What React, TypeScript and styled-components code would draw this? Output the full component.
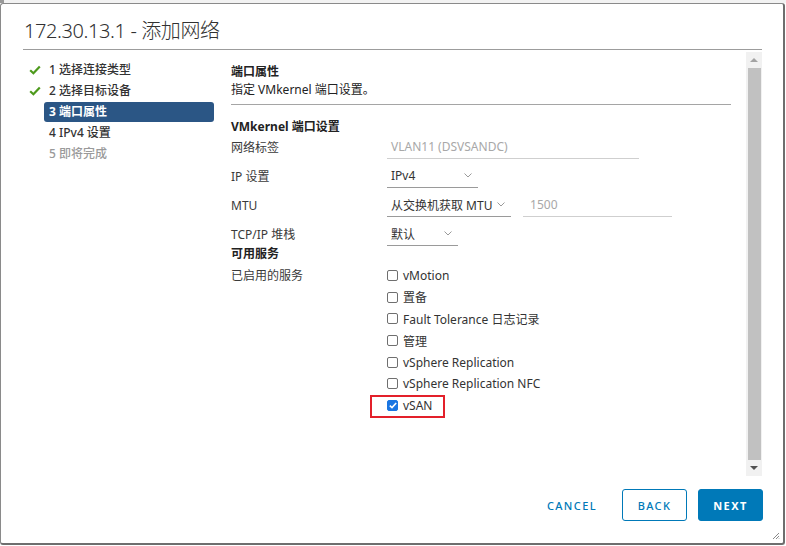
import type { FC } from "react";
import styled, { createGlobalStyle } from "styled-components";

const GlobalStyle = createGlobalStyle`
  html, body {
    margin: 0;
    padding: 0;
    background: #ffffff;
  }
  body {
    font-family: "Noto Sans", "Noto Sans CJK SC", sans-serif;
    font-size: 12px;
    color: #333;
  }
`;

const Backdrop = styled.div`
  height: 3px;
  background: linear-gradient(90deg, #9a9a9a 0 4px, #f2f2f2 4px);
`;

const Dialog = styled.div`
  box-sizing: border-box;
  width: 785px;
  height: 542px;
  background: #fff;
  border: 1px solid #8a8a8a;
  border-right: 2px solid #6e6e6e;
  border-bottom: 2px solid #6e6e6e;
  border-radius: 3px;
  display: flex;
  flex-direction: column;
  position: relative;
`;

const Header = styled.div`
  margin: 0 21px 0 22px;
  padding: 13px 0 4px 1px;
  border-bottom: 1px solid #9c9c9c;
`;

const Title = styled.h1`
  margin: 0;
  font-size: 20px;
  line-height: 28px;
  font-weight: 300;
  letter-spacing: -0.4px;
  color: #313131;
  font-family: "Noto Sans", "Noto Sans CJK SC", sans-serif;
`;

const Body = styled.div`
  display: flex;
  height: 424px;
  margin-top: 2px;
  padding: 0 21px 0 28px;
`;

const Nav = styled.ul`
  list-style: none;
  margin: 0;
  padding: 8px 0 0;
  display: flex;
  flex-direction: column;
  gap: 1px;
`;

const NavRow = styled.li`
  display: flex;
  align-items: center;
  height: 20px;
`;

const NavIconSlot = styled.span`
  width: 15px;
  display: flex;
  align-items: center;
`;

const NavLabel = styled.span<{ $active?: boolean; $disabled?: boolean }>`
  box-sizing: border-box;
  width: 170px;
  height: 20px;
  line-height: 20px;
  padding-left: 5px;
  border-radius: 3px;
  font-weight: ${(p) => (p.$active ? 700 : 500)};
  background: ${(p) => (p.$active ? "#2b5685" : "transparent")};
  color: ${(p) => (p.$active ? "#fff" : p.$disabled ? "#9a9a9a" : "#333")};
`;

const Content = styled.div`
  width: 502px;
  margin-left: 17px;
  display: flex;
  flex-direction: column;
`;

const SectionTitle = styled.div<{ $gap: number; $lh: number }>`
  margin-top: ${(p) => p.$gap}px;
  line-height: ${(p) => p.$lh}px;
  font-weight: 700;
  color: #222;
`;

const Description = styled.div`
  line-height: 18px;
  color: #222;
`;

const Divider = styled.hr`
  margin: 5px 0 0;
  border: 0;
  border-top: 1px solid #a5a5a5;
`;

const FormRow = styled.div`
  display: flex;
  align-items: center;
  height: 24px;
  margin-top: 5px;

  &:first-of-type {
    margin-top: 0;
  }
`;

const Label = styled.span`
  width: 156px;
  flex-shrink: 0;
  color: #3a3a3a;
`;

const Field = styled.div<{ $width: number; $muted?: boolean }>`
  box-sizing: border-box;
  width: ${(p) => p.$width}px;
  height: 24px;
  padding: 0 6px 0 4px;
  display: flex;
  align-items: center;
  justify-content: space-between;
  border-bottom: 1px solid ${(p) => (p.$muted ? "#cfcfcf" : "#9a9a9a")};
  color: ${(p) => (p.$muted ? "#a8a8a8" : "#333")};
  white-space: nowrap;
`;

const FieldGroup = styled.div`
  display: flex;
  gap: 12px;
`;

const Rows = styled.div`
  display: flex;
  flex-direction: column;
`;

const ServicesRow = styled.div`
  display: flex;
  margin-top: 3px;
`;

const ServicesLabel = styled(Label)`
  line-height: 21.6px;
`;

const ServiceList = styled.div`
  display: flex;
  flex-direction: column;
`;

const ServiceItem = styled.div`
  position: relative;
  height: 21.6px;
  display: flex;
  align-items: center;
  gap: 5px;
  color: #333;
`;

const Box = styled.span<{ $checked?: boolean }>`
  box-sizing: border-box;
  width: 11px;
  height: 11px;
  border-radius: 2px;
  border: 1px solid ${(p) => (p.$checked ? "#1b76e2" : "#6f6f6f")};
  background: ${(p) => (p.$checked ? "#1b76e2" : "#fff")};
  display: flex;
  align-items: center;
  justify-content: center;
`;

const Highlight = styled.span`
  position: absolute;
  left: -17px;
  top: 0;
  width: 75px;
  height: 23px;
  box-sizing: border-box;
  border: 2px solid #e3202a;
`;

const Scrollbar = styled.div`
  width: 16px;
  margin-left: 15px;
  background: #f1f1f1;
  display: flex;
  flex-direction: column;
  align-items: center;
`;

const ScrollArrow = styled.div`
  height: 16px;
  width: 16px;
  display: flex;
  align-items: center;
  justify-content: center;
`;

const ScrollThumb = styled.div`
  flex: 1;
  width: 13px;
  background: #c1c1c1;
`;

const Footer = styled.div`
  display: flex;
  justify-content: flex-end;
  gap: 11px;
  padding: 13px 20px 0 0;
`;

const Button = styled.button<{ $variant: "flat" | "outline" | "primary" }>`
  box-sizing: border-box;
  height: 32px;
  min-width: 65px;
  padding: 0 12px;
  border-radius: 3px;
  font-family: "Noto Sans", sans-serif;
  font-size: 11px;
  letter-spacing: 1.4px;
  font-weight: ${(p) => (p.$variant === "primary" ? 700 : 500)};
  cursor: pointer;
  border: 1px solid ${(p) => (p.$variant === "flat" ? "transparent" : "#0079b8")};
  background: ${(p) => (p.$variant === "primary" ? "#0079b8" : "transparent")};
  color: ${(p) => (p.$variant === "primary" ? "#fff" : "#0079b8")};
  ${(p) => (p.$variant === "flat" ? "margin-right: 1px;" : "")}
`;

const Grip = styled.svg`
  position: absolute;
  right: 3px;
  bottom: 3px;
`;

const CheckMark: FC = () => (
  <svg width="12" height="10" viewBox="0 0 12 10">
    <path d="M1.2 5.2 L4.4 8.2 L10.8 1.4" fill="none" stroke="#4d9a1c" strokeWidth="2.2" />
  </svg>
);

const Chevron: FC = () => (
  <svg width="8" height="5" viewBox="0 0 8 5">
    <path d="M0.5 0.5 L4 4 L7.5 0.5" fill="none" stroke="#9a9a9a" strokeWidth="1" />
  </svg>
);

const steps = [
  { label: "1 选择连接类型", done: true },
  { label: "2 选择目标设备", done: true },
  { label: "3 端口属性", active: true },
  { label: "4 IPv4 设置" },
  { label: "5 即将完成", disabled: true },
];

const services = [
  { label: "vMotion" },
  { label: "置备" },
  { label: "Fault Tolerance 日志记录" },
  { label: "管理" },
  { label: "vSphere Replication" },
  { label: "vSphere Replication NFC" },
  { label: "vSAN", checked: true },
];

const Select: FC<{ value: string; width: number }> = ({ value, width }) => (
  <Field $width={width}>
    <span>{value}</span>
    <Chevron />
  </Field>
);

const App: FC = () => (
  <>
    <GlobalStyle />
    <Backdrop />
    <Dialog>
      <Header>
        <Title>172.30.13.1 - 添加网络</Title>
      </Header>
      <Body>
        <Nav>
          {steps.map((step) => (
            <NavRow key={step.label}>
              <NavIconSlot>{step.done && <CheckMark />}</NavIconSlot>
              <NavLabel $active={step.active} $disabled={step.disabled}>
                {step.label}
              </NavLabel>
            </NavRow>
          ))}
        </Nav>
        <Content>
          <SectionTitle $gap={11} $lh={18}>
            端口属性
          </SectionTitle>
          <Description>指定 VMkernel 端口设置。</Description>
          <Divider />
          <SectionTitle $gap={13} $lh={17}>
            VMkernel 端口设置
          </SectionTitle>
          <Rows>
            <FormRow>
              <Label>网络标签</Label>
              <Field $width={252} $muted>
                VLAN11 (DSVSANDC)
              </Field>
            </FormRow>
            <FormRow>
              <Label>IP 设置</Label>
              <Select value="IPv4" width={91} />
            </FormRow>
            <FormRow>
              <Label>MTU</Label>
              <FieldGroup>
                <Select value="从交换机获取 MTU" width={124} />
                <Field $width={149} $muted>
                  &nbsp;1500
                </Field>
              </FieldGroup>
            </FormRow>
            <FormRow>
              <Label>TCP/IP 堆栈</Label>
              <Select value="默认" width={71} />
            </FormRow>
          </Rows>
          <SectionTitle $gap={0} $lh={16}>
            可用服务
          </SectionTitle>
          <ServicesRow>
            <ServicesLabel>已启用的服务</ServicesLabel>
            <ServiceList>
              {services.map((service) => (
                <ServiceItem key={service.label}>
                  {service.checked && <Highlight />}
                  <Box $checked={service.checked}>
                    {service.checked && (
                      <svg width="8" height="7" viewBox="0 0 8 7">
                        <path d="M0.8 3.6 L3 5.6 L7.2 1" fill="none" stroke="#fff" strokeWidth="1.6" />
                      </svg>
                    )}
                  </Box>
                  <span>{service.label}</span>
                </ServiceItem>
              ))}
            </ServiceList>
          </ServicesRow>
        </Content>
        <Scrollbar>
          <ScrollArrow>
            <svg width="8" height="4" viewBox="0 0 8 4">
              <path d="M0 4 L4 0 L8 4 Z" fill="#a3a3a3" />
            </svg>
          </ScrollArrow>
          <ScrollThumb />
          <ScrollArrow>
            <svg width="8" height="4" viewBox="0 0 8 4">
              <path d="M0 0 L4 4 L8 0 Z" fill="#505050" />
            </svg>
          </ScrollArrow>
        </Scrollbar>
      </Body>
      <Footer>
        <Button $variant="flat">CANCEL</Button>
        <Button $variant="outline">BACK</Button>
        <Button $variant="primary">NEXT</Button>
      </Footer>
      <Grip width="8" height="8" viewBox="0 0 8 8">
        <path d="M7 1 L1 7 M7 4 L4 7 M7 6.5 L6.5 7" stroke="#8a8a8a" strokeWidth="1" />
      </Grip>
    </Dialog>
  </>
);

export default App;
